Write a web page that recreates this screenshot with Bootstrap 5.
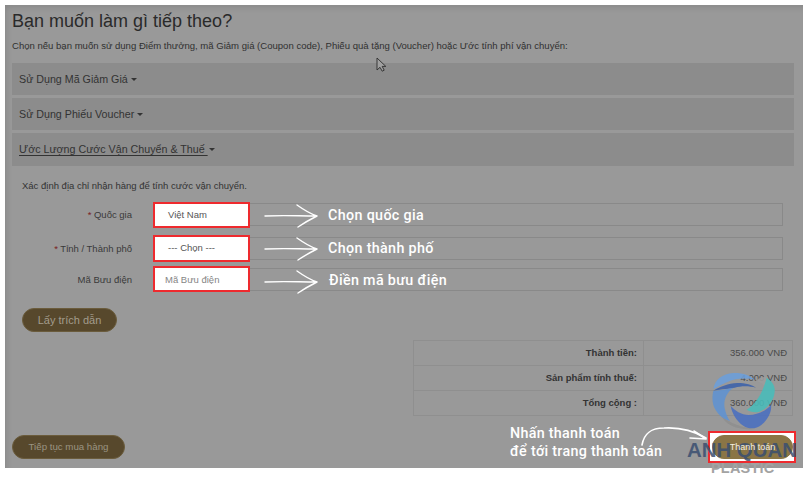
<!DOCTYPE html>
<html lang="vi">
<head>
<meta charset="utf-8">
<title>Giỏ hàng</title>
<link href="https://cdn.jsdelivr.net/npm/bootstrap@5.3.0/dist/css/bootstrap.min.css" rel="stylesheet">
<style>
html,body{height:478px;overflow:hidden;background:#fff}
body{font-family:"Liberation Sans",Arial,sans-serif;color:#333;position:relative}
.sheet{margin:5px 7px 0 5px;height:463px;background:#999;padding:0 9px 0 7px;position:relative;box-shadow:inset 3px 4px 6px -2px rgba(0,0,0,.12)}
.ttl{font-size:18px;font-weight:400;color:#2a2a2a;margin:0;padding-top:6px;line-height:20px}
.lede{font-size:9.55px;line-height:14px;margin:8px 0 10px;color:#303030}
.bar{background:#8c8c8c;height:32px;margin-bottom:3px;padding:0 7px;font-size:10.7px;line-height:32px;color:#333}
.bar+.bar{line-height:33px}
.bar.tall{height:33px}
.bar u{text-underline-offset:2px}
.caret-dn{display:inline-block;border-top:3px solid #333;border-left:3px solid transparent;border-right:3px solid transparent;vertical-align:2px;margin-left:3px}
.bar u+.caret-dn{margin-left:1px}
.hint{font-size:9.5px;line-height:12px;margin:14px 0 11px 10px;color:#333}
.frow{height:23px;display:flex;align-items:center}
.frow+.frow{margin-top:11px}
.frow.third{margin-top:8px}
.flabel{width:120px;text-align:right;font-size:9.5px;color:#3a3a3a;flex:none;padding-top:2px}
.flabel i{color:#7a1f1f;font-style:normal}
.fbox{margin-left:22px;width:629px;height:23px;border:1px solid #898989;background:#999;flex:none}
.pill{display:inline-block;border:1px solid #6b5c3c;border-radius:12px;background:#57482c;color:#a39c8c;font-size:11px;height:24px;line-height:22px;padding:0;text-align:center}
.getq{margin:17px 0 0 10px;width:95px}
.sum{width:380px;margin:8px 0 0 401px;border-collapse:collapse;font-size:9.5px;color:#333}
.sum td{border:1px solid #8f8f8f;height:25px;padding:0 5px;text-align:right}
.sum td:first-child{width:230px;font-weight:700;padding-right:6px}
.sum td:last-child{color:#4a4a4a}
.go{position:absolute;left:7px;top:430px;width:113px;font-size:9.7px;color:#9a9482}
.pay{position:absolute;left:712px;top:435px;width:81px;background:#8a7546;border-color:#8a7546;height:24px;line-height:22px;font-size:9px}
.pay span{position:relative;z-index:2;color:#f4eee0}
.ring{position:absolute;border:2px solid #ee2a2e;background:#fff;font-size:9.5px;color:#555;display:flex;align-items:center}
.ring.ph{padding-top:2px;color:#858585}
.wt{position:absolute;color:#fff;font-weight:500;font-family:Roboto,"Liberation Sans",sans-serif;font-size:14.3px;white-space:nowrap;line-height:17px;letter-spacing:.35px}
.wn{position:absolute;color:#fff;font-family:Roboto,"Liberation Sans",sans-serif;font-weight:500;font-size:14.3px;line-height:18px;letter-spacing:.3px;white-space:nowrap}
.art{position:absolute;left:0;top:0;pointer-events:none}
.brand{position:absolute;left:687px;top:440px;font-weight:700;color:#3b4f70;font-size:20.4px;line-height:20px;white-space:nowrap;opacity:.85}
.brand2{position:absolute;left:711px;top:461px;font-weight:700;color:#a3a3a3;font-size:14.5px;line-height:14px;letter-spacing:.2px}
</style>
</head>
<body>
<main class="sheet">
  <h2 class="ttl">Bạn muốn làm gì tiếp theo?</h2>
  <p class="lede">Chọn nếu bạn muốn sử dụng Điểm thưởng, mã Giảm giá (Coupon code), Phiếu quà tặng (Voucher) hoặc Ước tính phí vận chuyển:</p>
  <div class="bar">Sử Dụng Mã Giảm Giá<span class="caret-dn"></span></div>
  <div class="bar">Sử Dụng Phiếu Voucher<span class="caret-dn"></span></div>
  <div class="bar tall"><u>Ước Lượng Cước Vận Chuyển &amp; Thuế </u><span class="caret-dn"></span></div>
  <p class="hint">Xác định địa chỉ nhận hàng để tính cước vận chuyển.</p>
  <div class="frow"><div class="flabel"><i>*</i> Quốc gia</div><div class="fbox"></div></div>
  <div class="frow"><div class="flabel"><i>*</i> Tỉnh / Thành phố</div><div class="fbox"></div></div>
  <div class="frow third"><div class="flabel">Mã Bưu điện</div><div class="fbox"></div></div>
  <button class="pill getq" type="button">Lấy trích dẫn</button>
  <table class="sum">
    <tr><td>Thành tiền:</td><td>356.000 VNĐ</td></tr>
    <tr><td>Sản phẩm tính thuế:</td><td>4.000 VNĐ</td></tr>
    <tr><td>Tổng cộng :</td><td>360.000 VNĐ</td></tr>
  </table>
  <button class="pill go" type="button">Tiếp tục mua hàng</button>
</main>

<svg class="art" width="810" height="478" viewBox="0 0 810 478">
  <path d="M377 58V70L380 67.3L382.2 71.2L384.2 70.2L382.2 66.4H385.8Z" fill="#a0a0a0" stroke="#2c2c2c" stroke-width=".9" stroke-linejoin="round"/>
</svg>

<div class="ring" style="left:153px;top:202px;width:97px;height:26px;padding-left:13px">Việt Nam</div>
<div class="ring" style="left:153px;top:235px;width:97px;height:27px;padding-left:13px">--- Chọn ---</div>
<div class="ring ph" style="left:153px;top:266px;width:97px;height:26px;padding-left:10px">Mã Bưu điện</div>

<svg class="art" width="810" height="478" viewBox="0 0 810 478" fill="none" stroke="#fff" stroke-width="1.4" stroke-linecap="round" stroke-linejoin="round">
  <path d="M265 216C285 215 298 216 316 216M297 205C304 210 311 214 317 216C311 219 304 223 298 227"/>
  <path d="M265 249C285 248 298 249 316 249M297 238C304 243 311 247 317 249C311 252 304 256 298 260"/>
  <path d="M265 282C285 281 298 282 316 282M297 271C304 276 311 280 317 282C311 285 304 289 298 293"/>
  <path d="M642 445C644 434 650 428 664 428C680 427 694 431 706 438" stroke-width="1.6"/>
  <path d="M694 431L706 439L690 438" stroke-width="1.6"/>
</svg>

<span class="wt" style="left:328px;top:207px">Chọn quốc gia</span>
<span class="wt" style="left:328px;top:240px">Chọn thành phố</span>
<span class="wt" style="left:329px;top:272px">Điền mã bưu điện</span>
<span class="wn" style="left:510px;top:424px">Nhấn thanh toán</span>
<span class="wn" style="left:510px;top:442px">để tới trang thanh toán</span>

<div class="ring" style="left:708px;top:431px;width:88px;height:32px"></div>
<button class="pill pay" type="button"><span>Thanh toán</span></button>

<svg class="art" width="810" height="478" viewBox="0 0 810 478">
  <g transform="translate(704 369) scale(.3333)" opacity=".88">
    <path d="M50 135C65 155 95 172 150 180C105 184 62 170 50 135Z" fill="#8f8f8f"/>
    <path d="M155 35C170 24 182 22 192 26L190 62C182 48 170 40 155 35Z" fill="#9d9d9d"/>
    <path d="M28 60C32 32 55 14 88 12C115 11 138 18 152 32C125 26 95 28 72 38C56 45 42 52 28 60Z" fill="#6c9fdb"/>
    <path d="M28 65C50 52 72 44 100 42C125 42 145 48 156 56C135 50 112 50 92 56C65 60 45 62 28 65Z" fill="#3c62ab"/>
    <path d="M28 66C44 64 62 62 88 56C66 72 58 95 62 118C65 132 70 146 78 156C55 150 36 132 28 108C24 92 25 78 28 66Z" fill="#5f93d3"/>
    <path d="M80 110C92 124 112 138 134 138C160 138 186 126 201 108C204 124 194 150 172 168C156 180 136 182 118 170C98 156 84 134 80 110Z" fill="#4a6fc0"/>
    <path d="M188 26C204 36 214 50 212 68C210 94 192 118 166 128C152 132 138 128 128 122C150 108 174 80 188 26Z" fill="#49bdbb"/>
  </g>
</svg>
<div class="brand">ANH QUAN</div>
<div class="brand2">PLASTIC</div>
</body>
</html>
